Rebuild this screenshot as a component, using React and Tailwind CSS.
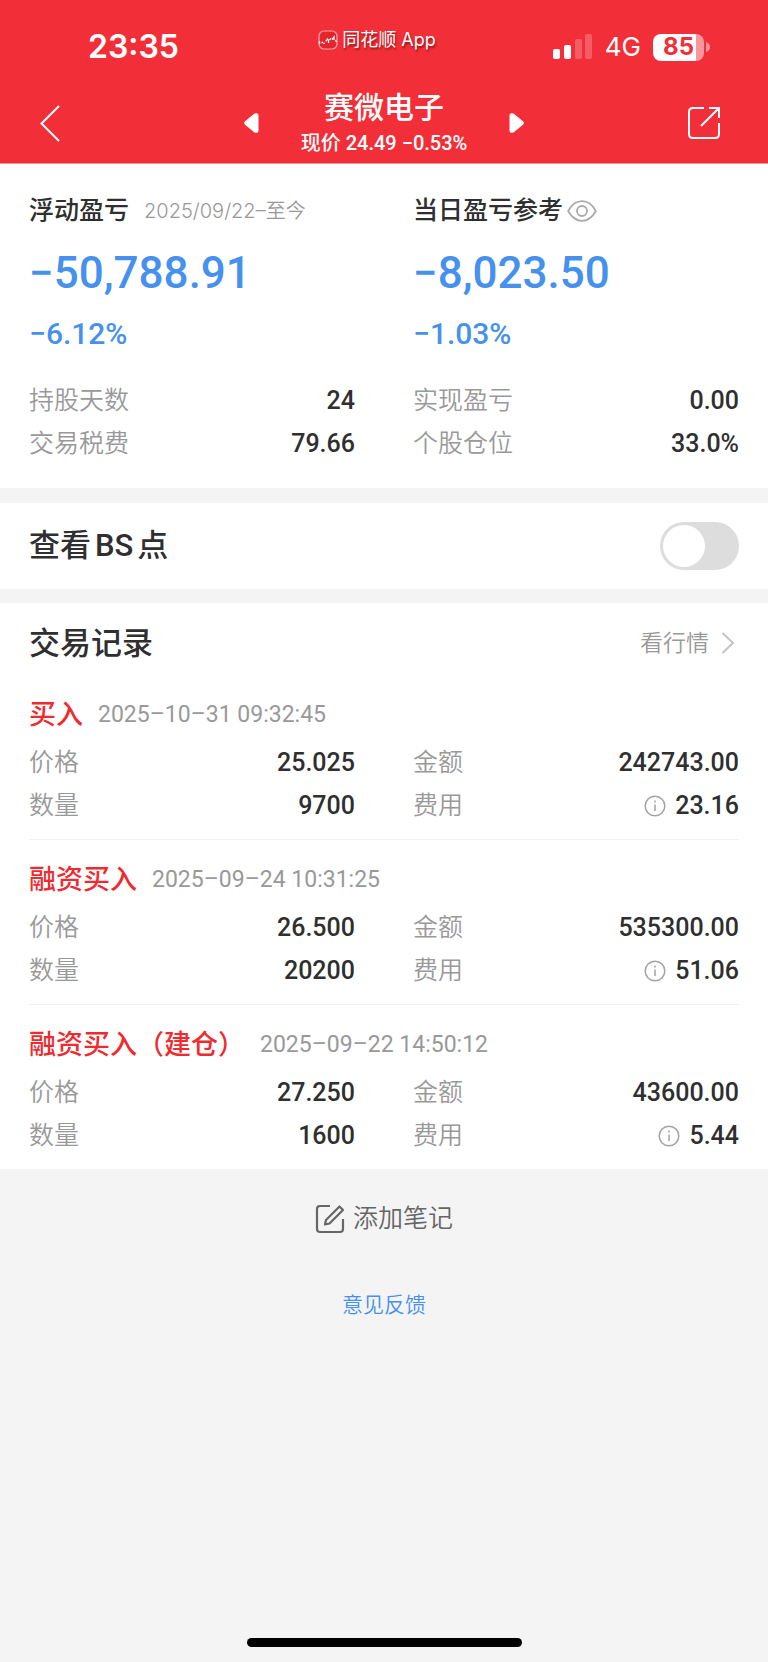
import { useState } from 'react';

const CJK = "font-['Inter','Noto_Sans_CJK_SC',sans-serif]";
const NUM = "font-['Roboto','Noto_Sans_CJK_SC',sans-serif]";

const records = [
  { type: '买入', time: '2025–10–31 09:32:45', price: '25.025', qty: '9700', amount: '242743.00', fee: '23.16' },
  { type: '融资买入', time: '2025–09–24 10:31:25', price: '26.500', qty: '20200', amount: '535300.00', fee: '51.06' },
  { type: '融资买入（建仓）', time: '2025–09–22 14:50:12', price: '27.250', qty: '1600', amount: '43600.00', fee: '5.44' },
];

function StatusBar() {
  return (
    <div className="flex h-[83px] items-center pt-[11px] pr-[14px]">
      <div className="flex-1">
        <div className="ml-[88px] text-[32px] leading-10 font-semibold">23:35</div>
      </div>
      <div className="flex items-center gap-1 pb-[14px]">
        <svg width="20" height="20" viewBox="0 0 20 20" fill="none">
          <rect x="1" y="1" width="18" height="18" rx="5" fill="#e3262b" stroke="#f9a6a8" strokeWidth="1.2" />
          <path d="M1.5 11v3M3.5 12.5h1.5M6 12.5v1.5M7.5 10.5h1.5M9 8.5l1.5 2v2.500M11.500 10l1.500-1.500M14 9.500l2-2.500v3M17.500 10l1 2" stroke="#fff" strokeWidth="1.3" />
        </svg>
        <span className="text-lg [text-shadow:1px_2px_2px_rgba(90,0,0,0.6)]">同花顺 App</span>
      </div>
      <div className="flex flex-1 items-center justify-end">
        <svg width="40" height="26" viewBox="0 0 40 26" fill="#fff">
          <rect x="0" y="15" width="7" height="10" rx="2" />
          <rect x="11" y="11" width="7" height="14" rx="2" />
          <rect x="22" y="5" width="7" height="20" rx="2" opacity="0.22" />
          <rect x="32" y="0" width="7" height="25" rx="2" opacity="0.22" />
        </svg>
        <span className="ml-3 text-[26px] leading-8">4G</span>
        <div className="ml-3 flex h-[27px] w-[51px] items-center justify-center overflow-hidden rounded-lg bg-[linear-gradient(to_right,#fff_85%,#f8979b_85%)] text-[24px] leading-none font-bold text-[#f22f38]">
          85
        </div>
        <svg className="mr-[44px] ml-[2px]" width="4" height="10" viewBox="0 0 4 10" fill="#f8979b">
          <path d="M0 0Q4 1.500 4 5T0 10Z" />
        </svg>
      </div>
    </div>
  );
}

function NavBar() {
  return (
    <div className="flex h-[80px] items-center justify-between pr-[47px] pl-[39px]">
      <button type="button" aria-label="返回" className="w-[42px]">
        <svg width="22" height="38" viewBox="0 0 22 38" fill="none" stroke="#fff" strokeWidth="2">
          <path d="M20 2L2.500 19.500L20 37" />
        </svg>
      </button>
      <div className="flex w-[280px] items-center justify-between">
        <button type="button" aria-label="上一只">
          <svg width="15" height="20" viewBox="0 0 15 20" fill="#fff">
            <path d="M1 8.300Q-.6 10 1 11.700L10.500 19.400Q14.500 21 14.500 17V3Q14.500-1 10.500.6Z" />
          </svg>
        </button>
        <div className="flex flex-col items-center gap-1">
          <h1 className="text-[30px] leading-9 font-medium">赛微电子</h1>
          <div className={`${NUM} text-[20px] leading-7 font-medium whitespace-nowrap`}>现价 24.49 −0.53%</div>
        </div>
        <button type="button" aria-label="下一只">
          <svg width="15" height="20" viewBox="0 0 15 20" fill="#fff">
            <path d="M14 8.300Q15.600 10 14 11.700L4.500 19.400Q.5 21 .5 17V3Q.5-1 4.500.6Z" />
          </svg>
        </button>
      </div>
      <button type="button" aria-label="分享">
        <svg width="34" height="34" viewBox="0 0 34 34" fill="none" stroke="#fff" strokeWidth="2">
          <path d="M17 2H6Q2 2 2 6V28Q2 32 6 32H28Q32 32 32 28V17M22 2H32V12M32 2L14 20" />
        </svg>
      </button>
    </div>
  );
}

function Row({ label, value, info }) {
  return (
    <div className="flex h-[43px] items-center justify-between">
      <span className="text-[25px] font-[350] text-[#999]">{label}</span>
      <span className="flex items-center gap-[9px]">
        {info && (
          <button type="button" aria-label="费用说明">
            <svg width="22" height="22" viewBox="0 0 22 22" fill="none" stroke="#a3a3a3" strokeWidth="1.5">
              <circle cx="11" cy="11" r="9.800" />
              <path d="M11 9.500V16M11 5.500V7.500" />
            </svg>
          </button>
        )}
        <span className={`${NUM} text-[25px] font-medium text-[#2f2f2f]`}>{value}</span>
      </span>
    </div>
  );
}

function Summary({ title, extra, amount, percent, children }) {
  return (
    <div>
      <div className="flex h-[30px] items-center whitespace-nowrap">
        <h2 className="text-[25px] font-medium text-[#2f2f2f]">{title}</h2>
        {extra}
      </div>
      <div className={`${NUM} mt-[21px] text-[44px] leading-[52px] font-medium text-[#4691ee]`}>{amount}</div>
      <div className={`${NUM} mt-[15px] mb-[25px] text-[30px] leading-10 font-medium text-[#4691ee]`}>{percent}</div>
      {children}
    </div>
  );
}

export default function App() {
  const [showBs, setShowBs] = useState(false);
  return (
    <div className={`${CJK} flex min-h-screen flex-col bg-[#f4f4f4]`}>
      <header className="border-b border-[#f8979b] bg-[#f22f38] text-white">
        <StatusBar />
        <NavBar />
      </header>

      <section className="grid grid-cols-2 gap-[58px] bg-white px-[29px] pt-8 pb-[23px]">
        <Summary
          title="浮动盈亏"
          extra={<span className="ml-[15px] text-[20px] font-[350] text-[#999]">2025/09/22–至今</span>}
          amount="−50,788.91"
          percent="−6.12%"
        >
          <Row label="持股天数" value="24" />
          <Row label="交易税费" value="79.66" />
        </Summary>
        <Summary
          title="当日盈亏参考"
          extra={
            <button type="button" aria-label="隐藏金额" className="ml-1">
              <svg width="30" height="22" viewBox="0 0 30 22" fill="none" stroke="#aaa" strokeWidth="1.800">
                <path d="M1.200 11C5 4 9.500 1.200 15 1.200S25 4 28.800 11C25 18 20.500 20.800 15 20.800S5 18 1.200 11Z" />
                <circle cx="15" cy="11" r="5" />
              </svg>
            </button>
          }
          amount="−8,023.50"
          percent="−1.03%"
        >
          <Row label="实现盈亏" value="0.00" />
          <Row label="个股仓位" value="33.0%" />
        </Summary>
      </section>

      <section className="mt-[15px] flex h-[86px] items-center justify-between bg-white px-[29px]">
        <label htmlFor="bs" className={`${NUM} flex gap-1 text-[31px] font-medium text-[#2f2f2f]`}>
          <span>查看</span> <span>BS</span> <span>点</span>
        </label>
        <input
          id="bs"
          type="checkbox"
          role="switch"
          checked={showBs}
          onChange={(e) => setShowBs(e.target.checked)}
          className="flex h-12 w-[79px] appearance-none items-center rounded-full bg-[#ddd] px-[3px] before:size-[42px] before:rounded-full before:bg-white checked:justify-end checked:bg-[#f22f38]"
        />
      </section>

      <section className="mt-[14px] bg-white px-[29px] pt-5">
        <div className="mb-[11px] flex h-10 items-center justify-between">
          <h2 className="text-[31px] font-medium text-[#2f2f2f]">交易记录</h2>
          <a href="#quote" className="flex items-center gap-3 pr-1 text-[23px] font-[350] text-[#999]">
            看行情
            <svg width="14" height="22" viewBox="0 0 14 22" fill="none" stroke="#c4c4c4" strokeWidth="2">
              <path d="M1.500 1L12 11L1.500 21" />
            </svg>
          </a>
        </div>
        {records.map((r) => (
          <article key={r.time} className="border-t border-[#f2f2f2] pt-5 pb-3 first-of-type:border-white">
            <div className="mb-[6px] flex h-10 items-center gap-[15px] whitespace-nowrap">
              <h3 className="text-[27px] font-medium text-[#f02a2e]">{r.type}</h3>
              <time className={`${NUM} text-[23px] text-[#999]`}>{r.time}</time>
            </div>
            <div className="grid grid-cols-2 gap-x-[58px]">
              <Row label="价格" value={r.price} />
              <Row label="金额" value={r.amount} />
              <Row label="数量" value={r.qty} />
              <Row label="费用" value={r.fee} info />
            </div>
          </article>
        ))}
      </section>

      <div className="flex flex-col items-center pt-[30px]">
        <button type="button" className="flex h-10 items-center gap-2 text-[25px] font-[350] text-[#666]">
          <svg width="30" height="30" viewBox="0 0 30 30" fill="none" stroke="#666" strokeWidth="2.200">
            <path d="M15 2H5Q2 2 2 5V25Q2 28 5 28H25Q28 28 28 25V15" />
            <path d="M24.500 2.500L28 6L14.500 19.500L10 20.500L11 16Z" strokeLinejoin="round" />
          </svg>
          添加笔记
        </button>
        <a href="#feedback" className="mt-[50px] text-[21px] leading-8 font-[350] text-[#4691ee]">意见反馈</a>
      </div>

      <footer className="mt-auto flex justify-center pb-[15px]">
        <div className="h-[9px] w-[275px] rounded-full bg-black" />
      </footer>
    </div>
  );
}
